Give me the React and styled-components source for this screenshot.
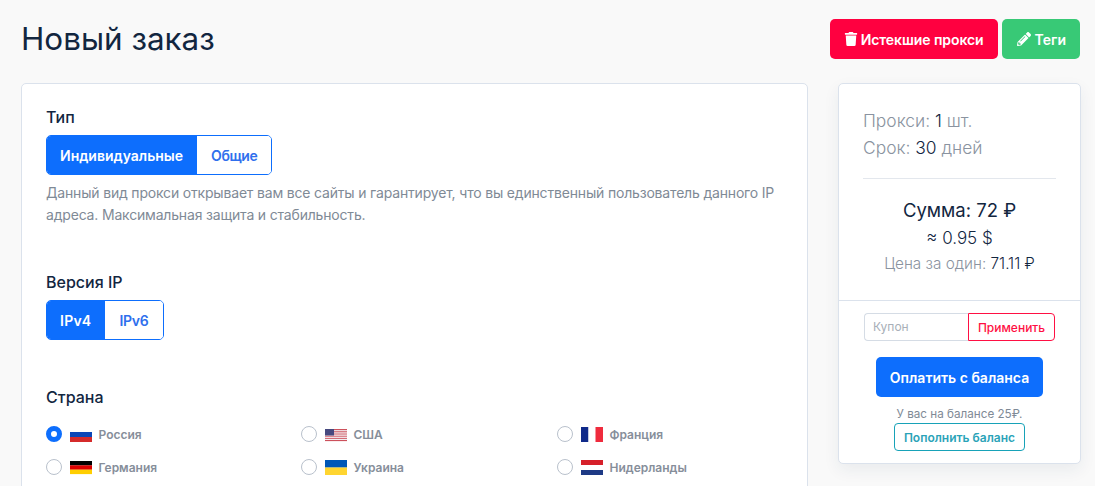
import React from 'react';
import styled, { createGlobalStyle } from 'styled-components';
import { FaTrash, FaPencilAlt } from 'react-icons/fa';

const GlobalStyle = createGlobalStyle`
  html, body { margin: 0; height: 100%; overflow: hidden; }
  body { background: #f9f9f9; font-family: Inter, "Noto Sans", sans-serif; color: #12263f; }
  * { box-sizing: border-box; }
`;

const Page = styled.div`
  padding: 19px 14px 0 21px;
`;

const Header = styled.header`
  display: flex;
  justify-content: space-between;
  align-items: flex-start;
  height: 64px;
`;

const Title = styled.h1`
  margin: 0;
  font-size: 31.4px;
  font-weight: 400;
  line-height: 40px;
  color: #12263f;
`;

const Actions = styled.div`
  display: flex;
  gap: 4px;
  margin-right: 1px;
`;

const ActionButton = styled.button`
  height: 40px;
  padding: 0 14px;
  display: flex;
  align-items: center;
  gap: 4px;
  border: 0;
  border-radius: 5px;
  background: ${(p) => p.$bg};
  color: #fff;
  font: 600 14px Inter, sans-serif;
`;

const ExpiredButton = styled(ActionButton)`
  gap: 3px;
  letter-spacing: -0.07px;
`;

const TagsButton = styled(ActionButton)`
  padding-left: 15px;
`;

const Layout = styled.div`
  display: grid;
  grid-template-columns: 787px 243px;
  gap: 30px;
  align-items: start;
`;

const Card = styled.div`
  background: #fff;
  border: 1px solid #dbe2ec;
  border-radius: 5px;
`;

const MainCard = styled(Card)`
  padding: 23px 24px 120px;
`;

const Label = styled.div`
  font-size: 16px;
  font-weight: 500;
  line-height: 20px;
  color: #12263f;
  margin-bottom: 8px;
  margin-top: ${(p) => p.$top || 0}px;
`;

const Segmented = styled.div`
  display: inline-flex;
  height: 40px;
  border: 1px solid #0d6efd;
  border-radius: 5px;
  overflow: hidden;
  vertical-align: top;
`;

const Segment = styled.button`
  padding: ${(p) => (p.$active ? '0 14px 0 13px' : '0 14px')};
  border: 0;
  background: ${(p) => (p.$active ? '#0d6efd' : '#fff')};
  color: ${(p) => (p.$active ? '#fff' : '#2f6fed')};
  font: 600 14px Inter, sans-serif;
  letter-spacing: ${(p) => p.$spacing || 'normal'};
`;

const Hint = styled.p`
  margin: 7px 0 0;
  max-width: 740px;
  font-size: 14px;
  line-height: 22px;
  letter-spacing: -0.18px;
  color: #7f8a96;
`;

const Countries = styled.div`
  display: grid;
  grid-template-columns: 255px 256px 1fr;
  row-gap: 13px;
  margin-top: 17px;
`;

const Country = styled.label`
  display: flex;
  align-items: center;
  height: 20px;
  font-size: 12px;
  font-weight: 600;
  color: #868e9a;
`;

const Radio = styled.span`
  width: 16px;
  height: 16px;
  margin-right: 8px;
  border-radius: 50%;
  flex: none;
  background: #fff;
  border: ${(p) => (p.$checked ? '5px solid #0d6efd' : '1px solid #b9c1cc')};
`;

const FlagBox = styled.svg`
  width: 22px;
  height: 15px;
  margin-right: 6.5px;
  flex: none;
`;

const Side = styled(Card)`
  height: 381px;
  box-shadow: 0 6px 16px rgba(30, 50, 90, 0.07);
`;

const Summary = styled.div`
  padding: 23px 24px 0;
  height: 216px;
`;

const Meta = styled.div`
  font-size: 17.4px;
  font-weight: 300;
  line-height: 27px;
  color: #8a93a0;
  & b { font-weight: 300; color: #12263f; }
`;

const Rule = styled.hr`
  margin: 17px 0 19px;
  border: 0;
  border-top: 1px solid #e3e7ed;
`;

const Total = styled.div`
  text-align: center;
  font-size: 18.5px;
  line-height: 24px;
  font-weight: 400;
  color: #12263f;
`;

const Approx = styled.div`
  margin-top: 3px;
  text-align: center;
  font-size: 17px;
  line-height: 26px;
  font-weight: 300;
  color: #12263f;
`;

const Unit = styled.div`
  margin-top: 1px;
  text-align: center;
  font-size: 15.3px;
  line-height: 24px;
  font-weight: 300;
  color: #8a93a0;
  & b { font-weight: 300; color: #12263f; }
`;

const Foot = styled.div`
  border-top: 1px solid #dbe2ec;
  padding-top: 12px;
  display: flex;
  flex-direction: column;
  align-items: center;
`;

const Coupon = styled.div`
  display: flex;
  width: 191px;
  height: 28px;
`;

const CouponInput = styled.div`
  flex: 1;
  padding-left: 8px;
  border: 1px solid #d5dce5;
  border-right: 0;
  border-radius: 4px 0 0 4px;
  font-size: 12px;
  line-height: 26px;
  color: #a8afb8;
`;

const CouponButton = styled.button`
  width: 87px;
  border: 1px solid #ff0f43;
  border-radius: 0 4px 4px 0;
  background: #fff;
  color: #ff0f43;
  font: 500 12px Inter, sans-serif;
  padding: 0;
`;

const PayButton = styled.button`
  width: 167px;
  height: 40px;
  margin-top: 16px;
  border: 0;
  border-radius: 5px;
  background: #0d6efd;
  color: #fff;
  font: 600 14px Inter, sans-serif;
  padding: 0;
`;

const Balance = styled.div`
  margin-top: 9px;
  font-size: 11.7px;
  line-height: 17px;
  color: #7f8a96;
`;

const TopUp = styled.button`
  width: 131px;
  height: 28px;
  border: 1px solid #17a2b8;
  border-radius: 4px;
  background: #fff;
  color: #2ba3b8;
  font: 600 12px Inter, sans-serif;
  padding: 0;
`;

function Stripes({ colors, top = 0, height = 15 }) {
  const h = height / colors.length;
  return colors.map((c, i) => <rect key={c + i} x="0" y={top + i * h} width="22" height={h + 0.1} fill={c} />);
}

const usStripes = Array.from({ length: 13 }, (_, i) => (i % 2 ? '#f4f4f6' : '#c8434f'));

const flags = {
  ru: <Stripes colors={['#fff', '#0c47b7', '#d52b2b']} />,
  de: <Stripes colors={['#000', '#dd0000', '#ffce00']} top={1} height={13} />,
  ua: <Stripes colors={['#0057b7', '#ffd530']} />,
  nl: <Stripes colors={['#d6202a', '#fff', '#1e3a85']} />,
  fr: (
    <>
      <rect width="7.5" height="15" fill="#0f2a8a" />
      <rect x="7.5" width="7" height="15" fill="#fff" />
      <rect x="14.5" width="7.5" height="15" fill="#ef2b3d" />
    </>
  ),
  us: (
    <>
      <Stripes colors={usStripes} top={2} height={12} />
      <rect y="2" width="9" height="6.5" fill="#46497f" />
    </>
  ),
};

const countries = [
  ['Россия', 'ru', true],
  ['США', 'us'],
  ['Франция', 'fr'],
  ['Германия', 'de'],
  ['Украина', 'ua'],
  ['Нидерланды', 'nl'],
];

export default function App() {
  return (
    <Page>
      <GlobalStyle />
      <Header>
        <Title>Новый заказ</Title>
        <Actions>
          <ExpiredButton $bg="#ff0040"><FaTrash size={14} />Истекшие прокси</ExpiredButton>
          <TagsButton $bg="#38c976"><FaPencilAlt size={14} />Теги</TagsButton>
        </Actions>
      </Header>
      <Layout>
        <MainCard>
          <Label>Тип</Label>
          <Segmented>
            <Segment $active>Индивидуальные</Segment>
            <Segment $spacing="-0.4px">Общие</Segment>
          </Segmented>
          <Hint>
            Данный вид прокси открывает вам все сайты и гарантирует, что вы единственный пользователь данного IP адреса. Максимальная защита и стабильность.
          </Hint>
          <Label $top={46}>Версия IP</Label>
          <Segmented>
            <Segment $active $spacing="0.25px">IPv4</Segment>
            <Segment $spacing="-0.25px">IPv6</Segment>
          </Segmented>
          <Label $top={47}>Страна</Label>
          <Countries>
            {countries.map(([name, code, checked]) => (
              <Country key={code}>
                <Radio $checked={checked} />
                <FlagBox viewBox="0 0 22 15">{flags[code]}</FlagBox>
                {name}
              </Country>
            ))}
          </Countries>
        </MainCard>
        <Side>
          <Summary>
            <Meta>Прокси: <b>1</b> шт.</Meta>
            <Meta>Срок: <b>30</b> дней</Meta>
            <Rule />
            <Total>Сумма: 72 ₽</Total>
            <Approx>≈ 0.95 $</Approx>
            <Unit>Цена за один: <b>71.11 ₽</b></Unit>
          </Summary>
          <Foot>
            <Coupon>
              <CouponInput>Купон</CouponInput>
              <CouponButton>Применить</CouponButton>
            </Coupon>
            <PayButton>Оплатить с баланса</PayButton>
            <Balance>У вас на балансе 25₽.</Balance>
            <TopUp>Пополнить баланс</TopUp>
          </Foot>
        </Side>
      </Layout>
    </Page>
  );
}
